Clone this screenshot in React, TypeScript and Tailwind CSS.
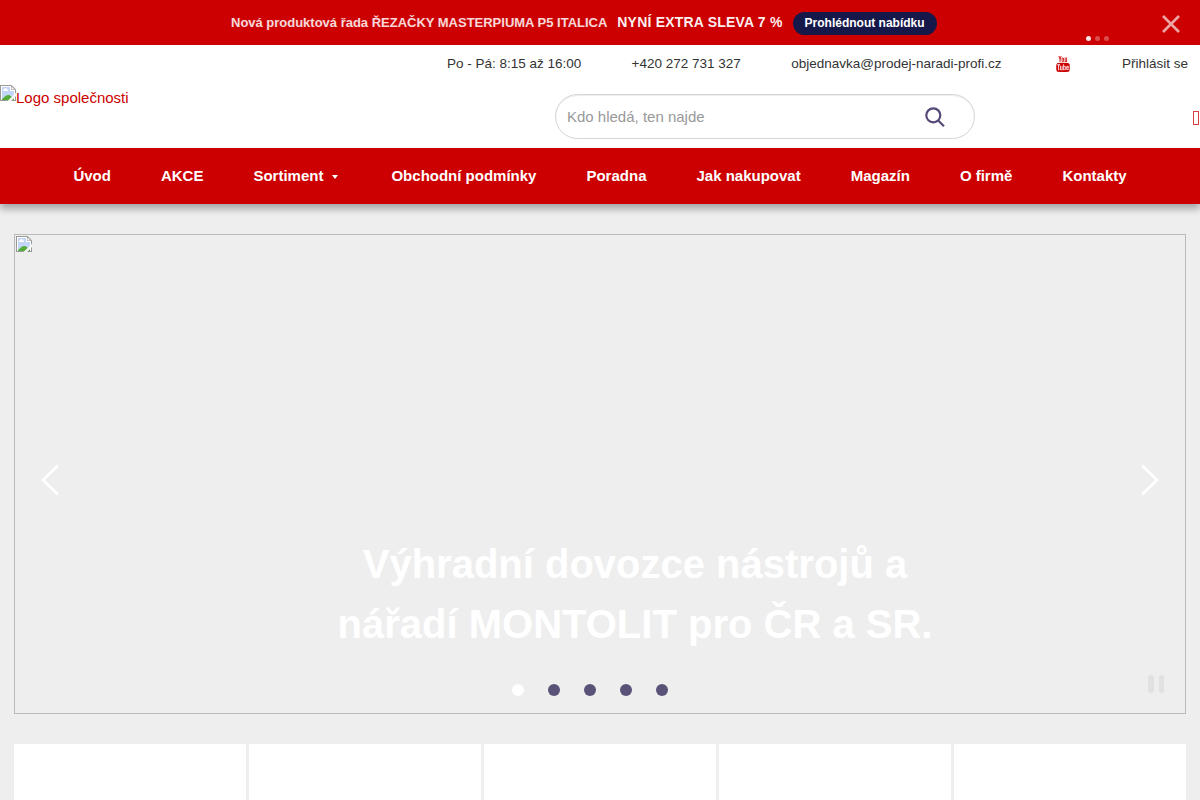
import type { ReactNode } from 'react';

function BrokenImage({ className = '' }: { className?: string }) {
  return (
    <svg viewBox="0 0 16 16" className={`h-4 w-4 shrink-0 ${className}`}>
      <path d="M0 0h11.500L16 4.500V16H0z" fill="#999" />
      <path d="M1 1h10v4h4v10H1z" fill="#fff" />
      <path d="M2 2h8v4h4v8H2z" fill="#c3d6f8" />
      <path d="M11.500 1.500v3h3z" fill="#fff" />
      <path d="M3 6V4.500h1.500V3h2v1.500H8V6z" fill="#fff" />
      <path d="M2 14c2-1 3.500-4 6-4s3.500 2 6 4v1H2z" fill="#53ac38" />
      <path d="M7.500 16L16 7.800V11l-5 5z" className="fill-[#f6f6f6]" />
    </svg>
  );
}

function YouTubeIcon() {
  return (
    <svg viewBox="128 0 1536 1792" preserveAspectRatio="none" className="h-4 w-[14px]" fill="#c00">
      <path d="M1099 1244v211q0 67-39 67-23 0-45-22v-301q22-22 45-22 39 0 39 67zm338 1v46h-90v-46q0-68 45-68t45 68zm-966-218h107v-94h-312v94h105v569h100v-569zm288 569h89v-494h-89v378q-30 42-57 42-18 0-21-21-1-3-1-35v-364h-89v391q0 49 8 73 12 37 58 37 48 0 102-61v54zm429-148v-197q0-73-9-99-17-56-71-56-50 0-93 54v-217h-89v663h89v-48q45 55 93 55 54 0 71-55 9-27 9-100zm338-10v-13h-91q0 51-2 61-7 36-40 36-46 0-46-69v-87h179v-103q0-79-27-116-39-51-106-51-68 0-107 51-28 37-28 116v173q0 79 29 116 39 51 108 51 72 0 108-53 18-27 21-54 2-9 2-58zm-608-913v-210q0-69-43-69t-43 69v210q0 70 43 70t43-70zm719 751q0 234-26 350-14 59-58 99t-102 46q-184 21-555 21t-555-21q-58-6-102.500-46t-57.500-99q-26-112-26-350 0-234 26-350 14-59 58-99t103-47q183-20 554-20t555 20q58 7 102.500 47t57.500 99q26 112 26 350zm-998-1276h102l-121 399v271h-100v-271q-14-74-61-212-37-103-65-187h106l71 263zm370 333v175q0 81-28 118-38 51-106 51-67 0-105-51-28-38-28-118v-175q0-80 28-117 38-51 105-51 68 0 106 51 28 37 28 117zm335-162v499h-91v-55q-53 62-103 62-46 0-59-37-8-24-8-75v-394h91v367q0 33 1 35 3 22 21 22 27 0 57-43v-381h91z" />
    </svg>
  );
}

const NAV: ReactNode[] = [
  'Úvod',
  'AKCE',
  <span key="s" className="flex items-center">
    Sortiment
    <svg viewBox="0 0 6 4" className="mt-0.5 mr-[3px] ml-[9px] h-1 w-1.5" fill="#fff">
      <path d="M0 0h6L3 4z" />
    </svg>
  </span>,
  'Obchodní podmínky',
  'Poradna',
  'Jak nakupovat',
  'Magazín',
  'O firmě',
  'Kontakty',
];

export default function App() {
  return (
    <div className="relative h-[800px] w-[1200px] overflow-hidden bg-[#eee] font-['Liberation_Sans',sans-serif]">
      <div className="relative flex h-[45px] items-center bg-[#c00] pl-[231px] font-bold whitespace-nowrap text-white">
        <span className="text-[13px] tracking-[-0.01px] text-white/85">Nová produktová řada ŘEZAČKY MASTERPIUMA P5 ITALICA</span>
        <span className="ml-[10px] text-[14px] tracking-[0.2px] text-white/95">NYNÍ EXTRA SLEVA 7 %</span>
        <a className="mt-px ml-[10px] flex h-[23px] items-center rounded-full bg-[#16184a] px-3 text-[12px]">Prohlédnout nabídku</a>
        <div className="absolute top-9 left-[1086px] flex gap-1">
          <i className="size-[5px] rounded-full bg-white/90" />
          <i className="size-[5px] rounded-full bg-white/30" />
          <i className="size-[5px] rounded-full bg-white/30" />
        </div>
        <svg viewBox="0 0 18 18" className="absolute top-[15px] left-[1162px] size-[18px]" stroke="#fff" strokeOpacity=".65" strokeWidth="2.600" fill="none">
          <path d="M1 1l16 16M17 1L1 17" />
        </svg>
      </div>

      <header className="h-[103px] bg-white">
        <div className="flex h-[38px] items-center justify-end pr-3 text-[13.500px] whitespace-nowrap text-[#333]">
          <span>Po - Pá: 8:15 až 16:00</span>
          <span className="ml-[50.300px]">+420 272 731 327</span>
          <span className="ml-[50.300px]">objednavka@prodej-naradi-profi.cz</span>
          <span className="mr-[52px] ml-[54.500px]">
            <YouTubeIcon />
          </span>
          <span>Přihlásit se</span>
        </div>
        <div className="flex h-[65px]">
          <a className="mt-0.5 flex h-[18px] w-[555px] text-[15px] leading-[26px] text-[#c00]">
            <BrokenImage />
            <span>Logo společnosti</span>
          </a>
          <div className="mt-[11px] flex h-[45px] w-[420px] items-center rounded-full border border-[#d5d5d5] bg-white pr-[29px] pl-[11px] shadow-[inset_0_1px_1px_rgba(0,0,0,0.08)]">
            <span className="flex-1 pt-0.5 text-[15px] text-[#999]">Kdo hledá, ten najde</span>
            <svg viewBox="0 0 20 20" className="h-5 w-5" fill="none" stroke="#55497a" strokeWidth="2.200">
              <circle cx="8.300" cy="8.300" r="7" />
              <path d="M13 13.200l6 6" />
            </svg>
          </div>
          <div className="mt-[28px] ml-auto mr-px h-[14px] w-[6px] border border-[#c00]/75" />
        </div>
      </header>

      <nav className="relative flex h-14 items-center justify-center gap-[50px] bg-[#c00] text-[15px] font-bold whitespace-nowrap text-white shadow-[0_5px_7px_rgba(0,0,0,0.3)]">
        {NAV.map((item, i) => (
          <a key={i}>{item}</a>
        ))}
      </nav>

      <main className="px-[14px] pt-[30px]">
        <section className="relative h-[480px] border border-[#bbb] p-px">
          <BrokenImage />
          <svg viewBox="0 0 18 32" className="absolute top-[229px] left-[26px] h-8 w-[18px]" fill="none" stroke="#fff" strokeWidth="2.500">
            <path d="M17 1.500L2 16l15 14.500" />
          </svg>
          <svg viewBox="0 0 18 32" className="absolute top-[229px] right-[26px] h-8 w-[18px]" fill="none" stroke="#fff" strokeWidth="2.500">
            <path d="M1 1.500L16 16 1 30.500" />
          </svg>
          <h1 className="absolute top-[299px] left-[320px] w-[600px] text-center text-[40px] leading-[60px] font-bold whitespace-nowrap text-white">
            Výhradní dovozce nástrojů a<br />
            nářadí MONTOLIT pro ČR a SR.
          </h1>
          <div className="absolute top-[449px] left-[497px] flex gap-6">
            <i className="size-3 rounded-full bg-white" />
            {[1, 2, 3, 4].map((n) => (
              <i key={n} className="size-3 rounded-full bg-[#5b5377]" />
            ))}
          </div>
          <div className="absolute top-[440px] left-[1133px] flex gap-[5px]">
            <i className="h-[18px] w-[5.500px] rounded-full bg-[#e1e1e1]" />
            <i className="h-[18px] w-[5.500px] rounded-full bg-[#e1e1e1]" />
          </div>
        </section>
        <div className="mt-[30px] grid grid-cols-5 gap-[3px]">
          {[0, 1, 2, 3, 4].map((n) => (
            <div key={n} className="h-[60px] bg-white" />
          ))}
        </div>
      </main>
    </div>
  );
}
